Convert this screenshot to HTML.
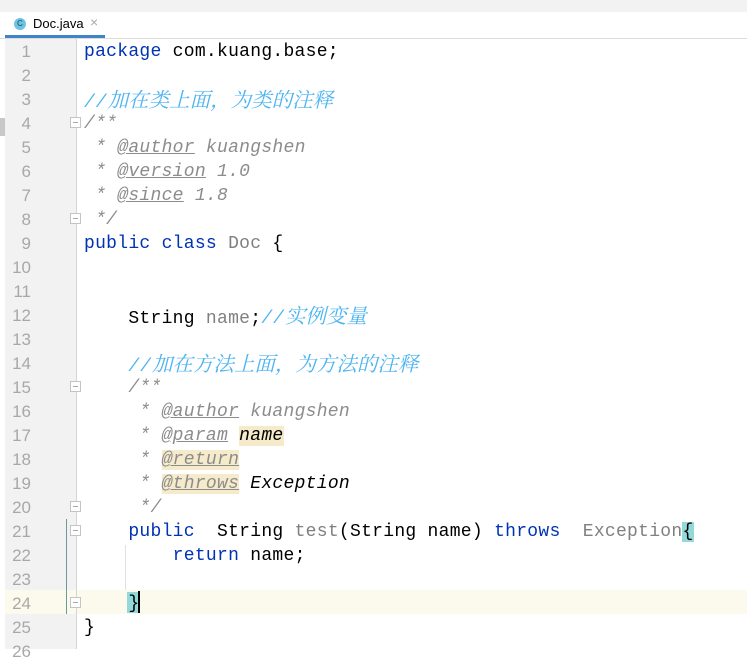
<!DOCTYPE html>
<html><head><meta charset="utf-8"><style>
body{margin:0;width:747px;height:649px;overflow:hidden;background:#fff;position:relative;font-family:"Liberation Mono",monospace;}
.top{position:absolute;left:0;top:0;width:747px;height:12px;background:#f2f2f2;border-bottom:1px solid #dcdcdc}
.tabbar{position:absolute;left:0;top:12px;width:747px;height:26px;background:#fff;border-bottom:1px solid #dcdcdc}
.tab{position:absolute;left:5px;top:0;width:100px;height:23px;border-bottom:3px solid #4083c9;font:13px "Liberation Sans",sans-serif;}
.tab .ic{position:absolute;left:9px;top:6px;width:12px;height:12px;border-radius:50%;background:#6fc3df;color:#0b4a66;font-size:8px;text-align:center;line-height:12px}
.tab .t{position:absolute;left:28px;top:4px;color:#000}
.tab .x{position:absolute;left:85px;top:2px;color:#aaa;font-size:14px}
.strip{position:absolute;left:0;top:39px;width:5px;height:610px;background:#fff;border-right:1px solid #e4e4e4}
.gutter{position:absolute;left:5px;top:39px;width:71px;height:610px;background:#f2f2f2;border-right:1px solid #d5d5d5}
.num{position:absolute;left:5px;width:26px;text-align:right;font:17px "Liberation Sans",sans-serif;color:#a8a8a8;height:24px;line-height:24px;margin-top:2px}
.ln{position:absolute;left:84px;height:24px;line-height:24px;font-size:18px;letter-spacing:0.28px;white-space:pre;color:#000;margin-top:2px}
.cur{position:absolute;left:77px;top:590px;width:670px;height:24px;background:#fcfaed}
.curg{position:absolute;left:5px;top:590px;width:71px;height:24px;background:#fcfaed}
.k{color:#0033b3}.g{color:#808080}.c{color:#8c8c8c;font-style:italic}.u{text-decoration:underline}
.cn{color:#4db4f2;font-style:italic;font-family:"Liberation Mono","Noto Serif CJK SC",serif;font-size:18px;letter-spacing:1px}
.cn2{font-family:"Noto Serif CJK SC",serif;font-size:20.5px;letter-spacing:0;line-height:20px}
.h{background:#f5eaca}.b{background:#93d9d9}
.fold{position:absolute;left:70px;width:9px;height:9px;border:1px solid #c4c4c4;background:#fff}
.fold:after{content:"";position:absolute;left:2px;top:4px;width:5px;height:1px;background:#aaa}
</style></head><body>
<div class="top"></div>
<div class="tabbar"><div class="tab"><div class="ic">C</div><span class="t">Doc.java</span><span class="x">×</span></div></div>
<div class="strip"></div><div style="position:absolute;left:0;top:118px;width:5px;height:18px;background:#c8c8c8"></div>
<div class="gutter"></div>
<div class="curg"></div><div class="cur"></div>
<div style="position:absolute;left:66px;top:519px;width:1px;height:95px;background:#6a9a9a"></div>
<div style="position:absolute;left:125px;top:545px;width:1px;height:45px;background:#e0e0e0"></div>
<div style="position:absolute;left:127px;top:592px;width:11px;height:21px;background:#93d9d9"></div>
<div style="position:absolute;left:138px;top:591px;width:2px;height:22px;background:#000"></div>

<div class="num" style="top:38px">1</div><div class="num" style="top:62px">2</div><div class="num" style="top:86px">3</div><div class="num" style="top:110px">4</div><div class="num" style="top:134px">5</div><div class="num" style="top:158px">6</div><div class="num" style="top:182px">7</div><div class="num" style="top:206px">8</div><div class="num" style="top:230px">9</div><div class="num" style="top:254px">10</div><div class="num" style="top:278px">11</div><div class="num" style="top:302px">12</div><div class="num" style="top:326px">13</div><div class="num" style="top:350px">14</div><div class="num" style="top:374px">15</div><div class="num" style="top:398px">16</div><div class="num" style="top:422px">17</div><div class="num" style="top:446px">18</div><div class="num" style="top:470px">19</div><div class="num" style="top:494px">20</div><div class="num" style="top:518px">21</div><div class="num" style="top:542px">22</div><div class="num" style="top:566px">23</div><div class="num" style="top:590px">24</div><div class="num" style="top:614px">25</div><div class="num" style="top:638px">26</div>

<div class="fold" style="top:117px"></div><div class="fold" style="top:213px"></div><div class="fold" style="top:381px"></div><div class="fold" style="top:501px"></div><div class="fold" style="top:525px"></div><div class="fold" style="top:597px"></div>

<div class="ln" style="top:38px"><span class="k">package</span> com.kuang.base;</div>
<div class="ln" style="top:86px"><span class="cn">//<span class="cn2">加在类上面，为类的注释</span></span></div>
<div class="ln c" style="top:110px">/**</div>
<div class="ln c" style="top:134px"> * <span class="u">@author</span> kuangshen</div>
<div class="ln c" style="top:158px"> * <span class="u">@version</span> 1.0</div>
<div class="ln c" style="top:182px"> * <span class="u">@since</span> 1.8</div>
<div class="ln c" style="top:206px"> */</div>
<div class="ln" style="top:230px"><span class="k">public class</span> <span class="g">Doc</span> {</div>
<div class="ln" style="top:302px">    String <span class="g">name</span>;<span class="cn">//<span class="cn2">实例变量</span></span></div>
<div class="ln" style="top:350px">    <span class="cn">//<span class="cn2">加在方法上面，为方法的注释</span></span></div>
<div class="ln c" style="top:374px">    /**</div>
<div class="ln c" style="top:398px">     * <span class="u">@author</span> kuangshen</div>
<div class="ln c" style="top:422px">     * <span class="u">@param</span> <span class="h" style="color:#000">name</span></div>
<div class="ln c" style="top:446px">     * <span class="u h">@return</span></div>
<div class="ln c" style="top:470px">     * <span class="u h">@throws</span> <span style="color:#000">Exception</span></div>
<div class="ln c" style="top:494px">     */</div>
<div class="ln" style="top:518px">    <span class="k">public</span>  String <span class="g">test</span>(String name) <span class="k">throws</span>  <span class="g">Exception</span><span class="b">{</span></div>
<div class="ln" style="top:542px">        <span class="k">return</span> name;</div>
<div class="ln" style="top:590px">    }</div>
<div class="ln" style="top:614px">}</div>
</body></html>
